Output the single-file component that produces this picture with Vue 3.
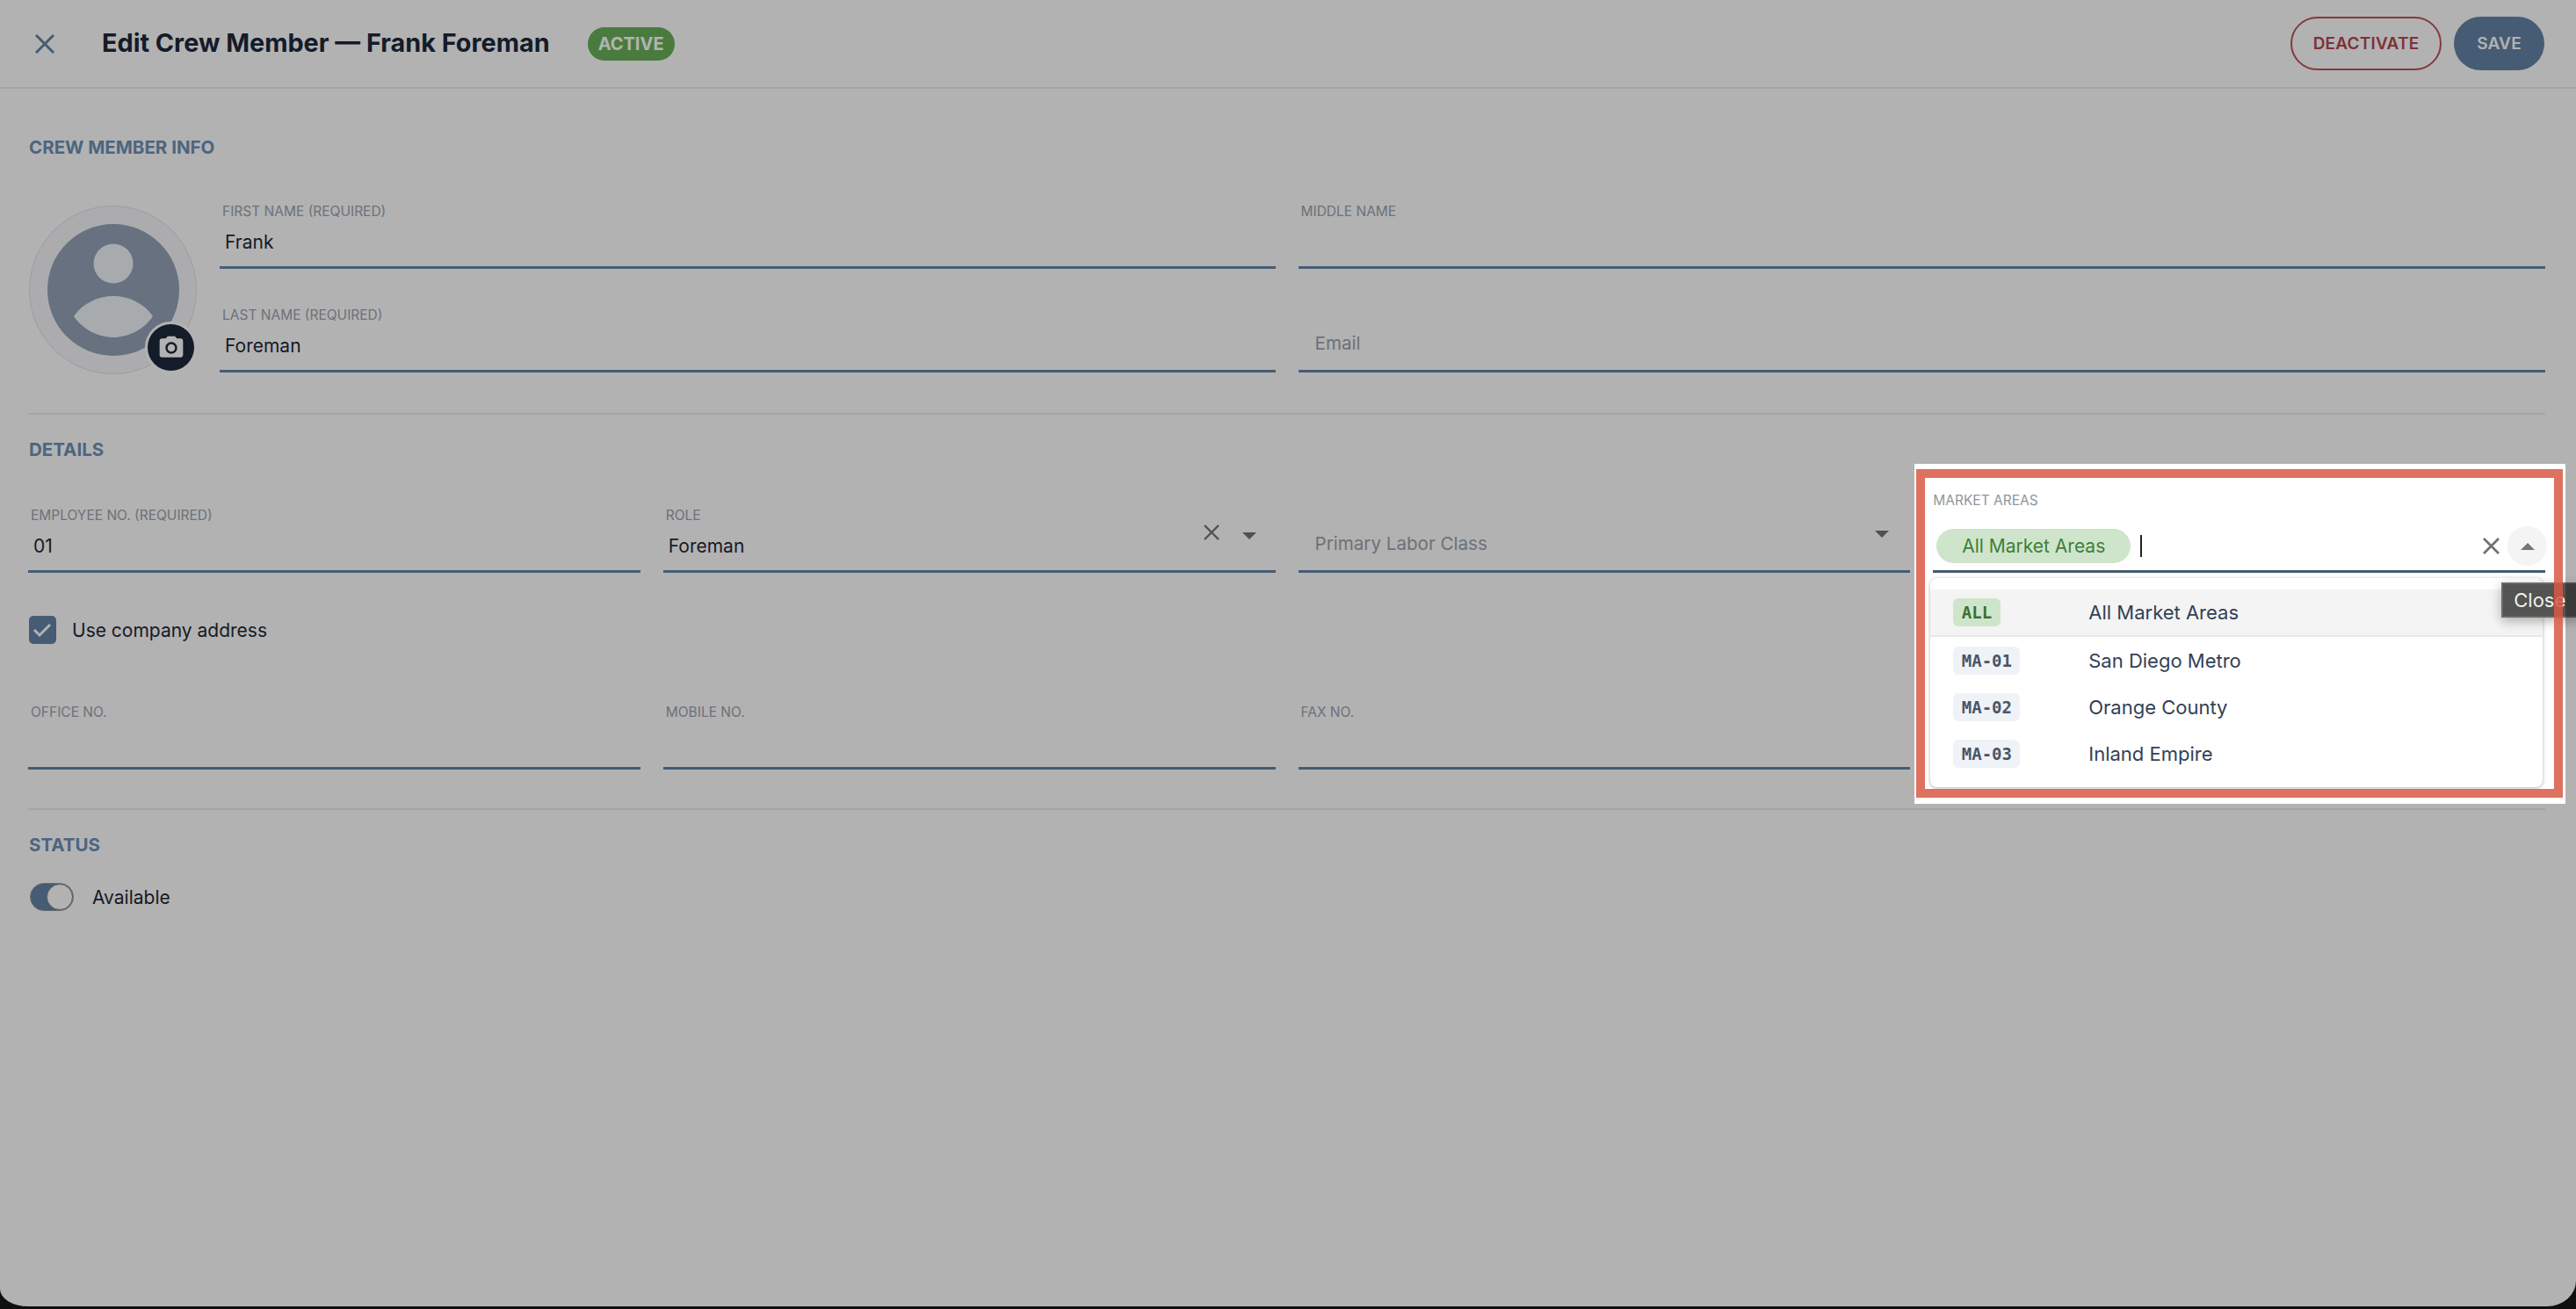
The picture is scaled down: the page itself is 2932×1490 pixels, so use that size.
<script setup>
const rowThree = ['OFFICE NO.', 'MOBILE NO.', 'FAX NO.']

const marketAreas = [
  { code: 'ALL', name: 'All Market Areas', all: true },
  { code: 'MA-01', name: 'San Diego Metro' },
  { code: 'MA-02', name: 'Orange County' },
  { code: 'MA-03', name: 'Inland Empire' }
]
</script>

<template>
  <div class="screen">
    <div class="sheet">
      <header class="topbar">
        <button class="close-btn" type="button" aria-label="Close">
          <svg width="22" height="22" viewBox="0 0 22 22" fill="none" stroke="currentColor" stroke-width="3">
            <line x1="1" y1="1" x2="21" y2="21"></line>
            <line x1="21" y1="1" x2="1" y2="21"></line>
          </svg>
        </button>
        <h1 class="title">Edit Crew Member — Frank Foreman</h1>
        <span class="badge">ACTIVE</span>
        <div class="actions">
          <button class="btn btn--outline" type="button">DEACTIVATE</button>
          <button class="btn btn--solid" type="button">SAVE</button>
        </div>
      </header>

      <main class="content">
        <h2 class="section-title">CREW MEMBER INFO</h2>
        <div class="grid info">
          <div class="info-left">
            <div class="avatar">
              <svg class="avatar-art" width="150" height="150" viewBox="0 0 150 150">
                <circle cx="75" cy="75" r="75" fill="#94a3b8"></circle>
                <ellipse cx="75" cy="45" rx="22.5" ry="22.5" fill="#f1f5f9"></ellipse>
                <path d="M30 105C40 90 58 82 75 82S110 90 120 105C110 120 92 129 75 129S40 120 30 105Z" fill="#f1f5f9"></path>
              </svg>
              <span class="avatar-btn">
                <svg width="32" height="32" viewBox="0 0 24 24" fill="#fff">
                  <circle cx="12" cy="12" r="3.2"></circle>
                  <path d="M9 2 7.17 4H4c-1.1 0-2 .9-2 2v12c0 1.1.9 2 2 2h16c1.1 0 2-.9 2-2V6c0-1.1-.9-2-2-2h-3.17L15 2H9zm3 15c-2.76 0-5-2.24-5-5s2.24-5 5-5 5 2.24 5 5-2.24 5-5 5z"></path>
                </svg>
              </span>
            </div>
            <div class="stack">
              <div class="field">
                <label class="field-label">FIRST NAME (REQUIRED)</label>
                <span class="field-value">Frank</span>
              </div>
              <div class="field">
                <label class="field-label">LAST NAME (REQUIRED)</label>
                <span class="field-value">Foreman</span>
              </div>
            </div>
          </div>
          <div class="stack info-right">
            <div class="field">
              <label class="field-label">MIDDLE NAME</label>
              <span class="field-value"></span>
            </div>
            <div class="field field--empty">
              <span class="placeholder">Email</span>
            </div>
          </div>
        </div>

        <hr class="divider" />

        <h2 class="section-title">DETAILS</h2>
        <div class="grid details">
          <div class="field">
            <label class="field-label">EMPLOYEE NO. (REQUIRED)</label>
            <span class="field-value">01</span>
          </div>
          <div class="field">
            <label class="field-label">ROLE</label>
            <span class="field-value">Foreman</span>
            <svg class="role-clear" width="18" height="18" viewBox="0 0 18 18" fill="none" stroke="currentColor" stroke-width="2.4">
              <line x1="1" y1="1" x2="17" y2="17"></line>
              <line x1="17" y1="1" x2="1" y2="17"></line>
            </svg>
            <span class="arrow arrow--down role-arrow"></span>
          </div>
          <div class="field field--empty">
            <span class="placeholder">Primary Labor Class</span>
            <span class="arrow arrow--down labor-arrow"></span>
          </div>
          <div class="field market">
            <label class="field-label market-label">MARKET AREAS</label>
            <div class="market-row">
              <span class="chip">All Market Areas</span>
              <span class="caret"></span>
              <svg class="market-clear" width="19" height="19" viewBox="0 0 19 19" fill="none" stroke="currentColor" stroke-width="2.6">
                <line x1="1" y1="1" x2="18" y2="18"></line>
                <line x1="18" y1="1" x2="1" y2="18"></line>
              </svg>
              <span class="toggle-btn"><span class="arrow arrow--up"></span></span>
            </div>
            <ul class="menu">
              <li
                v-for="area in marketAreas"
                :key="area.code"
                :class="['menu-item', { 'menu-item--active': area.all }]"
              >
                <span :class="['code', { 'code--all': area.all }]">{{ area.code }}</span>
                <span class="menu-name">{{ area.name }}</span>
              </li>
            </ul>
            <div class="tooltip">Close</div>
          </div>
        </div>

        <label class="checkbox-row">
          <span class="checkbox">
            <svg width="31" height="32" viewBox="0 0 31 32" fill="none" stroke="#fff" stroke-width="3">
              <polyline points="6,16 12,22 24,10"></polyline>
            </svg>
          </span>
          Use company address
        </label>

        <div class="grid phones">
          <div v-for="label in rowThree" :key="label" class="field">
            <label class="field-label">{{ label }}</label>
            <span class="field-value"></span>
          </div>
        </div>

        <hr class="divider" />

        <h2 class="section-title">STATUS</h2>
        <div class="switch-row">
          <span class="switch"><span class="switch-thumb"></span></span>
          Available
        </div>
      </main>
    </div>

    <!-- tutorial spotlight: dims everything but the highlighted box -->
    <div class="spotlight">
      <div class="spotlight-frame"></div>
    </div>
  </div>
</template>

<style>
html,
body {
  margin: 0;
  background: #161616;
}
</style>

<style scoped>
.screen {
  position: relative;
  width: 2932px;
  height: 1490px;
  overflow: hidden;
  background: #161616;
  font-family: Inter, "Liberation Sans", sans-serif;
  color: #1f2937;
}

.sheet {
  height: 1487px;
  background: #fff;
  border-bottom-left-radius: 32px 20px;
  border-bottom-right-radius: 33px 29px;
}

/* header */
.topbar {
  display: flex;
  align-items: center;
  height: 99px;
  padding: 0 36px 0 40px;
  border-bottom: 2px solid #ececec;
}

.close-btn {
  display: flex;
  padding: 0;
  border: 0;
  background: transparent;
  color: #6485a7;
  margin-right: 54px;
}

.title {
  margin: 0 0 1px;
  font-size: 28.8px;
  font-weight: 700;
  line-height: 40px;
  color: #1e293b;
}

.badge {
  margin-left: 43px;
  height: 38px;
  padding: 0 12px;
  border-radius: 19px;
  background: #6ab15a;
  color: #fff;
  font-size: 20px;
  font-weight: 700;
  line-height: 38px;
}

.actions {
  display: flex;
  gap: 14px;
  margin-left: auto;
}

.btn {
  height: 61px;
  border-radius: 31px;
  font-family: inherit;
  font-size: 19px;
  font-weight: 600;
  letter-spacing: 0.2px;
}

.btn--outline {
  width: 172px;
  border: 2px solid #bb5458;
  background: transparent;
  color: #b7484d;
}

.btn--solid {
  width: 103px;
  border: 0;
  background: #6485a7;
  color: #fff;
}

/* body */
.content {
  padding: 56px 35px 0 32px;
}

.section-title {
  margin: 0;
  padding-left: 1px;
  font-size: 20.5px;
  font-weight: 700;
  line-height: 22px;
  color: #6d91b8;
}

.divider {
  height: 2px;
  margin: 44px 0 29px;
  border: 0;
  background: #ececec;
}

.grid {
  display: grid;
  grid-template-columns: repeat(4, 1fr);
  column-gap: 26px;
}

.info {
  margin-top: 52px;
}

.details {
  margin-top: 54px;
}

.info-left {
  grid-column: span 2;
  display: flex;
  gap: 26px;
}

.info-right {
  grid-column: span 2;
}

.stack {
  flex: 1;
  display: flex;
  flex-direction: column;
  gap: 43px;
}

.avatar {
  position: relative;
  flex: none;
  display: flex;
  align-items: center;
  justify-content: center;
  box-sizing: border-box;
  width: 191px;
  height: 192px;
  margin: 3px 0 0 1px;
  border: 1px solid #dfe3e8;
  border-radius: 50%;
  background: #f6f7f9;
}

.avatar-btn {
  position: absolute;
  right: 2px;
  bottom: 3px;
  display: flex;
  align-items: center;
  justify-content: center;
  width: 53px;
  height: 53px;
  border-radius: 50%;
  background: #1e293b;
  box-shadow: 0 0 0 3px #fff;
}

.field {
  position: relative;
  display: flex;
  flex-direction: column;
  box-sizing: border-box;
  height: 75px;
  border-bottom: 3px solid #6485a7;
}

.field-label {
  padding: 1px 0 0 3px;
  font-size: 15.5px;
  line-height: 18px;
  color: #9ca3af;
}

.field-value {
  padding: 11px 0 0 6px;
  font-size: 21px;
  line-height: 30px;
  color: #1f2937;
}

.field--empty {
  justify-content: flex-end;
}

.placeholder {
  padding: 0 0 15px 19px;
  font-size: 20.6px;
  line-height: 30px;
  color: #9ca3af;
}

.arrow {
  display: block;
  width: 0;
  height: 0;
  border-left: 8px solid transparent;
  border-right: 8px solid transparent;
}

.arrow--down {
  border-top: 8px solid #757575;
}

.arrow--up {
  border-bottom: 8px solid #757575;
}

.role-clear {
  position: absolute;
  top: 20px;
  right: 64px;
  color: #757575;
}

.role-arrow {
  position: absolute;
  top: 29px;
  right: 22px;
}

.labor-arrow {
  position: absolute;
  top: 27px;
  right: 24px;
}

/* market areas */
.market {
  border-bottom-color: #44586f;
}

.market-label {
  margin-top: -17px;
  padding-left: 0;
  color: #8f959c;
}

.market-row {
  display: flex;
  align-items: center;
  margin-top: 20px;
  padding-left: 4px;
}

.chip {
  box-sizing: border-box;
  width: 221px;
  height: 39px;
  border-radius: 20px;
  background: #cfe5cb;
  color: #3f7f3a;
  font-size: 21px;
  line-height: 39px;
  text-align: center;
}

.caret {
  width: 2px;
  height: 25px;
  margin-left: 11px;
  background: #222;
}

.market-clear {
  margin-left: auto;
  color: #707070;
}

.toggle-btn {
  display: flex;
  align-items: center;
  justify-content: center;
  width: 45px;
  height: 45px;
  margin: 0 -2px 0 9px;
  border-radius: 50%;
  background: #f4f4f4;
}

.menu {
  position: absolute;
  top: 81px;
  left: -3px;
  right: 3px;
  margin: 0;
  padding: 13px 0 12px;
  list-style: none;
  border-radius: 8px;
  background: #fff;
  box-shadow: 0 1px 4px rgba(0, 0, 0, 0.3);
}

.menu-item {
  display: flex;
  align-items: center;
  height: 53px;
  padding-left: 26px;
  font-size: 22px;
  color: #334155;
}

.menu-item--active {
  height: 52px;
  background: #f4f4f4;
  border-bottom: 2px solid #e8e8e8;
}

.code {
  box-sizing: border-box;
  display: block;
  height: 32px;
  padding: 0 9.5px;
  margin-right: auto;
  border-radius: 6px;
  background: #eff2f7;
  color: #4a5568;
  font-family: "DejaVu Sans Mono", "Liberation Mono", monospace;
  font-size: 19px;
  font-weight: 700;
  line-height: 32px;
}

.code--all {
  background: #cfe5cb;
  color: #3a7034;
}

.menu-name {
  position: absolute;
  left: 180px;
}

.tooltip {
  position: absolute;
  top: 86px;
  left: 647px;
  box-sizing: border-box;
  width: 90px;
  height: 40px;
  padding-left: 12px;
  border: 2px solid #6a6a68;
  background: #545452;
  box-shadow: 0 4px 12px rgba(0, 0, 0, 0.3);
  color: #f0f0f0;
  font-size: 22px;
  line-height: 36px;
  white-space: nowrap;
}

/* checkbox + switch */
.checkbox-row {
  display: flex;
  align-items: center;
  gap: 18px;
  margin: 49px 0 0 1px;
  font-size: 21px;
  color: #1f2937;
}

.checkbox {
  display: flex;
  align-items: center;
  justify-content: center;
  width: 31px;
  height: 32px;
  border-radius: 5px;
  background: #6485a7;
}

.phones {
  margin-top: 68px;
}

.switch-row {
  display: flex;
  align-items: center;
  gap: 21px;
  margin: 32px 0 0 2px;
  font-size: 21px;
  color: #1f2937;
}

.switch {
  position: relative;
  display: block;
  box-sizing: border-box;
  width: 50px;
  height: 32px;
  border: 1px solid #9a9a9a;
  border-radius: 16px;
  background: #6485a7;
}

.switch-thumb {
  position: absolute;
  top: 0;
  right: 0;
  box-sizing: border-box;
  width: 30px;
  height: 30px;
  border: 1px solid #8a8a8a;
  border-radius: 50%;
  background: #fff;
}

/* highlight box */
.spotlight {
  position: absolute;
  left: 2179px;
  top: 528px;
  box-sizing: border-box;
  width: 741px;
  height: 387px;
  padding: 6px 3px 7px 2px;
  box-shadow: 0 0 0 4000px rgba(0, 0, 0, 0.3);
  pointer-events: none;
}

.spotlight-frame {
  box-sizing: border-box;
  height: 100%;
  border: 10px solid rgba(216, 88, 68, 0.85);
}
</style>
